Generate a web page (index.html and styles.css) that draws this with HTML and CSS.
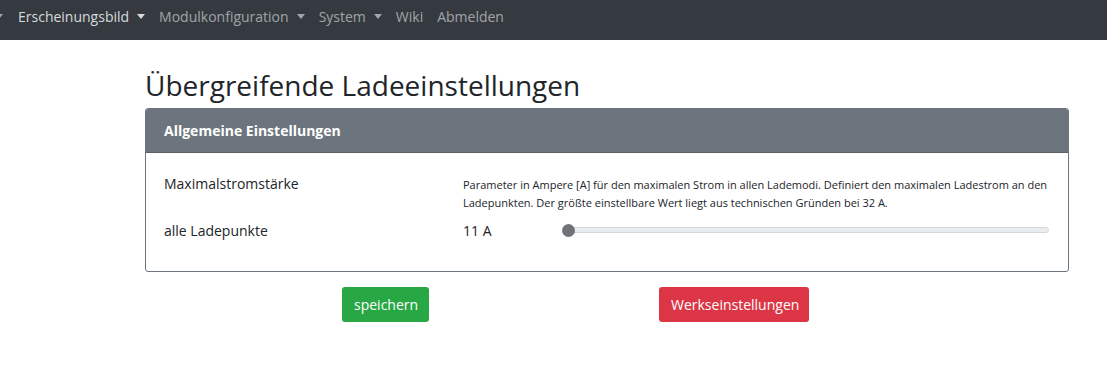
FILE: index.html
```html
<!DOCTYPE html>
<html lang="de">
<head>
<meta charset="utf-8">
<title>Übergreifende Ladeeinstellungen</title>
<link rel="stylesheet" href="styles.css">
</head>
<body>
<nav class="navbar">
  <span class="nav-item prev"><span class="caret"></span></span>
  <span class="nav-item active">Erscheinungsbild<span class="caret"></span></span>
  <span class="nav-item">Modulkonfiguration<span class="caret"></span></span>
  <span class="nav-item">System<span class="caret"></span></span>
  <span class="nav-item">Wiki</span>
  <span class="nav-item">Abmelden</span>
</nav>
<main class="container">
  <h1 class="title">Übergreifende Ladeeinstellungen</h1>
  <section class="card">
    <div class="card-header">Allgemeine Einstellungen</div>
    <div class="card-body">
      <div class="row">
        <div class="label">Maximalstromstärke</div>
        <div class="help">Parameter in Ampere [A] für den maximalen Strom in allen Lademodi. Definiert den maximalen Ladestrom an den Ladepunkten. Der größte einstellbare Wert liegt aus technischen Gründen bei 32 A.</div>
      </div>
      <div class="row row-slider">
        <div class="label">alle Ladepunkte</div>
        <div class="value">11 A</div>
        <div class="slider"><span class="track"></span><span class="thumb"></span></div>
      </div>
    </div>
  </section>
  <div class="actions">
    <button class="btn btn-success">speichern</button>
    <button class="btn btn-danger">Werkseinstellungen</button>
  </div>
</main>
</body>
</html>
```
FILE: styles.css
```css
* { box-sizing: border-box; }
html, body { margin: 0; padding: 0; background: #fff; }
body {
  font-family: "Open Sans", "Noto Sans", sans-serif;
  color: #212529;
  width: 1107px;
  height: 388px;
  overflow: hidden;
}
.navbar {
  height: 40px;
  background: #343a40;
  display: flex;
  align-items: center;
  margin-left: -19px;
  padding-bottom: 7px;
}
.nav-item {
  font-size: 14px;
  color: rgba(255,255,255,.55);
  padding: 0 7px 0 7px;
  display: inline-flex;
  align-items: center;
  white-space: nowrap;
}
.nav-item.prev { padding: 0 8px 0 6px; }
.nav-item.active { color: rgba(255,255,255,.82); }
.caret {
  display: inline-block;
  width: 0; height: 0;
  margin-left: 8px;
  border-top: 5px solid currentColor;
  border-left: 4.5px solid transparent;
  border-right: 4.5px solid transparent;
}
.container {
  margin-left: 145px;
  width: 924px;
}
.title {
  margin: 27px 0 5px 0;
  font-size: 28px;
  font-weight: 500;
  line-height: 36px;
  color: #212529;
}
.card {
  border: 1px solid #6c757d;
  border-radius: 3px;
  overflow: hidden;
}
.card-header {
  background: #6c757d;
  color: #fff;
  font-weight: 700;
  font-size: 14px;
  height: 44px;
  display: flex;
  align-items: center;
  padding: 0 18px;
  border-bottom: 1px solid #5a6268;
}
.card-body {
  padding: 19px 19px 25px 18px;
}
.row {
  display: grid;
  grid-template-columns: 299px 1fr;
  align-items: start;
}
.row-slider {
  grid-template-columns: 299px 100px 1fr;
  align-items: center;
  margin-top: 2px;
  height: 32px;
}
.label {
  font-size: 14px;
  line-height: 22px;
}
.row .label { padding-top: 1px; }
.help {
  font-size: 11px;
  line-height: 18px;
  padding-top: 4px;
  color: #212529;
}
.value { font-size: 14px; }
.slider {
  position: relative;
  height: 14px;
  display: flex;
  align-items: center;
}
.track {
  display: block;
  width: 100%;
  height: 6px;
  background: #e9ecef;
  border: 1px solid #d6d8db;
  border-radius: 3px;
}
.thumb {
  position: absolute;
  left: -1px;
  top: 0.5px;
  width: 13px;
  height: 13px;
  border-radius: 50%;
  background: #707479;
}
.actions {
  display: flex;
  margin-top: 15px;
  padding-left: 197px;
  gap: 230px;
}
.btn {
  font-family: inherit;
  font-size: 14px;
  height: 35px;
  padding: 0 12px;
  border: 0;
  border-radius: 3px;
  color: #fff;
}
.btn-success { background: #28a745; width: 87px; }
.btn-danger { background: #dc3545; width: 150px; }
```
